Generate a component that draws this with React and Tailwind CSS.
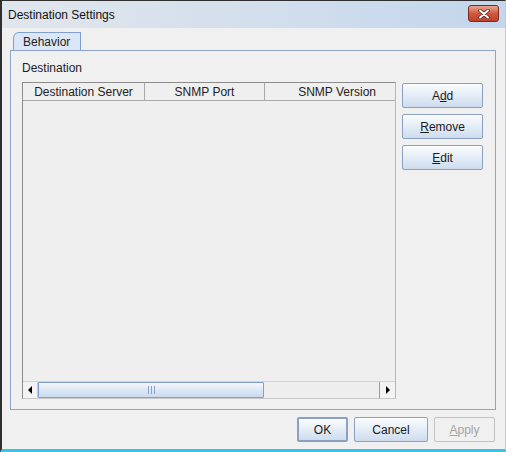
import React from 'react'

const font = { fontFamily: '"Liberation Sans", Arial, sans-serif' }

function Btn({ children, className = '', disabled = false, primary = false }) {
    const base = disabled
        ? 'bg-[#f0f0f0] border-[#c2c2c2] text-[#a3a3a3]'
        : 'bg-gradient-to-b from-[#fbfcfe] via-[#e4edf7] to-[#cddcee] border-[#8aa1c1] text-[#1a1a1a]'
    return (
        <div
            className={`h-[25px] flex items-center justify-center rounded-[2px] text-[12px] ${primary ? 'border-2 border-[#6d86ad]' : 'border'} ${base} ${className}`}
        >
            {children}
        </div>
    )
}

function HeaderCell({ children, className = '' }) {
    return (
        <div className={`h-[17px] flex items-center justify-center border-r border-[#a9a9a9] bg-[#efefef] text-[12px] text-[#222] ${className}`}>
            {children}
        </div>
    )
}

export default function App() {
    return (
        <div className="w-[506px] h-[452px] flex flex-col bg-[#f0f0f0] border-l-2 border-t border-[#2f2f2f] border-r border-r-[#c3ccd6] border-b-[3px] border-b-[#34c4e6]" style={font}>
            {/* title bar */}
            <div className="h-[27px] shrink-0 flex items-center justify-between bg-gradient-to-r from-[#e1e6ed] via-[#d3dfec] to-[#c3d6ec] pl-[6px] pr-[6px]">
                <span className="text-[12px] text-[#111]">
                    Destination Settings
                </span>
                <div className="w-[31px] h-[17px] -mt-[2px] rounded-[3px] border border-[#7a2a1c] bg-gradient-to-b from-[#e9a590] via-[#d0593f] to-[#c2402a] flex items-center justify-center">
                    <svg width="14" height="10" viewBox="0 0 14 10">
                        <path d="M3 1.5 L11 8.5 M11 1.5 L3 8.5" stroke="#3a1a14" strokeWidth="3.4" strokeLinecap="round" />
                        <path d="M3 1.5 L11 8.5 M11 1.5 L3 8.5" stroke="#ffffff" strokeWidth="2.2" strokeLinecap="round" />
                    </svg>
                </div>
            </div>

            {/* body */}
            <div className="flex-1 flex flex-col pl-[8px] pr-[9px] pt-[4px]">
                {/* tab */}
                <div className="flex pl-[3px]">
                    <div className="w-[68px] h-[18px] flex items-center pl-[9px] border border-b-0 border-[#7f9fd3] rounded-tl-[6px] rounded-tr-[1px] bg-[#dbe7f8] text-[12px] text-[#222]">
                        Behavior
                    </div>
                </div>

                {/* tab panel */}
                <div className="h-[360px] border border-[#8ea5c8] flex flex-col pl-[11px] pr-[12px] pt-[10px] pb-[10px]">
                    <div className="text-[12px] text-[#222] leading-[14px] h-[21px]">Destination</div>
                    <div className="flex-1 flex gap-[6px]">
                        {/* table */}
                        <div className="w-[375px] flex flex-col border border-[#8c8c8c] border-r-[#b5b5b5] border-b-[#c9c9c9]">
                            <div className="flex border-b border-[#a9a9a9]">
                                <HeaderCell className="w-[122px]">Destination Server</HeaderCell>
                                <HeaderCell className="w-[120px]">SNMP Port</HeaderCell>
                                <HeaderCell className="flex-1 border-r-0 pl-[14px]">SNMP Version</HeaderCell>
                            </div>
                            <div className="flex-1 bg-[#efefef]" />
                            {/* horizontal scrollbar */}
                            <div className="h-[17px] flex border-t border-[#d3d3d3]">
                                <div className="w-[15px] flex items-center justify-center border-r border-[#c9c9c9] bg-[#f3f3f3]">
                                    <svg width="5" height="8" viewBox="0 0 5 8"><path d="M4 0 L0 4 L4 8 Z" fill="#000" /></svg>
                                </div>
                                <div className="w-[226px] flex items-center justify-center border border-[#7f9fd3] rounded-[1px] bg-gradient-to-b from-[#f4f8fd] via-[#dde8f6] to-[#c9daef]">
                                    <div className="flex gap-[2px]">
                                        <div className="w-[1px] h-[8px] bg-[#8aa2c6]" />
                                        <div className="w-[1px] h-[8px] bg-[#8aa2c6]" />
                                        <div className="w-[1px] h-[8px] bg-[#8aa2c6]" />
                                    </div>
                                </div>
                                <div className="flex-1 bg-[#eeeeee]" />
                                <div className="w-[16px] flex items-center justify-center border-l border-[#9a9a9a] bg-[#f3f3f3]">
                                    <svg width="5" height="8" viewBox="0 0 5 8"><path d="M1 0 L5 4 L1 8 Z" fill="#000" /></svg>
                                </div>
                            </div>
                        </div>

                        {/* side buttons */}
                        <div className="w-[81px] flex flex-col gap-[6px] pt-[1px]">
                            <Btn>A<span className="underline">d</span>d</Btn>
                            <Btn><span className="underline">R</span>emove</Btn>
                            <Btn><span className="underline">E</span>dit</Btn>
                        </div>
                    </div>
                </div>

                {/* bottom buttons */}
                <div className="flex justify-end gap-[6px] pt-[7px] pr-[1px]">
                    <Btn primary className="w-[51px]">OK</Btn>
                    <Btn className="w-[74px]">Cancel</Btn>
                    <Btn disabled className="w-[61px]"><span className="underline">A</span>pply</Btn>
                </div>
            </div>
        </div>
    )
}
